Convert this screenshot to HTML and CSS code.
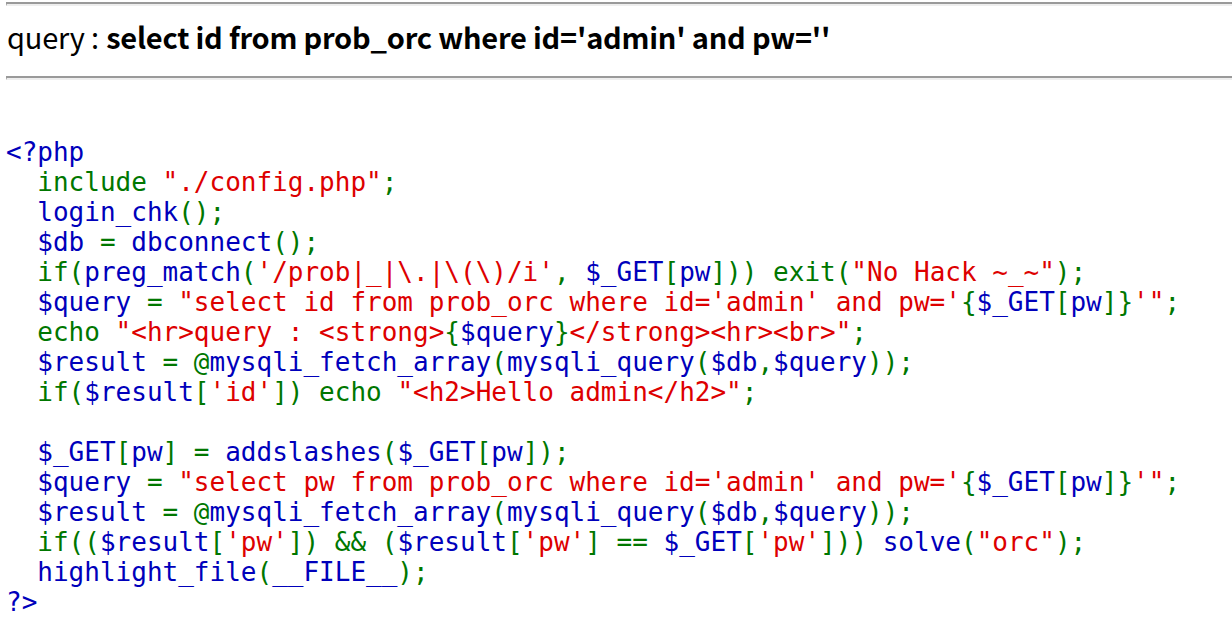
FILE: index.html
```html
<!DOCTYPE html>
<html>
<head>
<meta charset="utf-8">
<link rel="stylesheet" href="styles.css">
</head>
<body>
<hr class="rule">
<div class="query">query : <strong class="q-strong">select id from prob_orc where id='admin' and pw=''</strong></div>
<hr class="rule">
<pre class="code"><span class="d">&lt;?php</span>
  <span class="k">include </span><span class="s">"./config.php"</span><span class="k">;</span>
  <span class="d">login_chk</span><span class="k">();</span>
  <span class="d">$db </span><span class="k">= </span><span class="d">dbconnect</span><span class="k">();</span>
  <span class="k">if(</span><span class="d">preg_match</span><span class="k">(</span><span class="s">'/prob|_|\.|\(\)/i'</span><span class="k">, </span><span class="d">$_GET</span><span class="k">[</span><span class="d">pw</span><span class="k">])) exit(</span><span class="s">"No Hack ~_~"</span><span class="k">);</span>
  <span class="d">$query </span><span class="k">= </span><span class="s">"select id from prob_orc where id='admin' and pw='</span><span class="k">{</span><span class="d">$_GET</span><span class="k">[</span><span class="d">pw</span><span class="k">]}</span><span class="s">'"</span><span class="k">;</span>
  <span class="k">echo </span><span class="s">"&lt;hr&gt;query : &lt;strong&gt;</span><span class="k">{</span><span class="d">$query</span><span class="k">}</span><span class="s">&lt;/strong&gt;&lt;hr&gt;&lt;br&gt;"</span><span class="k">;</span>
  <span class="d">$result </span><span class="k">= @</span><span class="d">mysqli_fetch_array</span><span class="k">(</span><span class="d">mysqli_query</span><span class="k">(</span><span class="d">$db</span><span class="k">,</span><span class="d">$query</span><span class="k">));</span>
  <span class="k">if(</span><span class="d">$result</span><span class="k">[</span><span class="s">'id'</span><span class="k">]) echo </span><span class="s">"&lt;h2&gt;Hello admin&lt;/h2&gt;"</span><span class="k">;</span>

  <span class="d">$_GET</span><span class="k">[</span><span class="d">pw</span><span class="k">] = </span><span class="d">addslashes</span><span class="k">(</span><span class="d">$_GET</span><span class="k">[</span><span class="d">pw</span><span class="k">]);</span>
  <span class="d">$query </span><span class="k">= </span><span class="s">"select pw from prob_orc where id='admin' and pw='</span><span class="k">{</span><span class="d">$_GET</span><span class="k">[</span><span class="d">pw</span><span class="k">]}</span><span class="s">'"</span><span class="k">;</span>
  <span class="d">$result </span><span class="k">= @</span><span class="d">mysqli_fetch_array</span><span class="k">(</span><span class="d">mysqli_query</span><span class="k">(</span><span class="d">$db</span><span class="k">,</span><span class="d">$query</span><span class="k">));</span>
  <span class="k">if((</span><span class="d">$result</span><span class="k">[</span><span class="s">'pw'</span><span class="k">]) &amp;&amp; (</span><span class="d">$result</span><span class="k">[</span><span class="s">'pw'</span><span class="k">] == </span><span class="d">$_GET</span><span class="k">[</span><span class="s">'pw'</span><span class="k">])) </span><span class="d">solve</span><span class="k">(</span><span class="s">"orc"</span><span class="k">);</span>
  <span class="d">highlight_file</span><span class="k">(</span><span class="d">__FILE__</span><span class="k">);</span>
<span class="d">?&gt;</span></pre>
</body>
</html>
```

FILE: styles.css
```css
html, body {
  margin: 0;
  padding: 0;
  background: #ffffff;
}
body {
  padding: 2px 0 0 6px;
  color: #000000;
  overflow: hidden;
}
.rule {
  margin: 0;
  height: 0;
  border: 0;
  border-top: 2px solid #9a9a9a;
  border-bottom: 2px solid #eeeeee;
  border-left: 1px solid #9a9a9a;
}
.query {
  height: 70px;
  box-sizing: border-box;
  padding: 0 0 9px 1px;
  display: flex;
  align-items: center;
  font-family: "Noto Sans CJK KR", "Noto Sans", sans-serif;
  font-size: 29px;
  letter-spacing: -0.22px;
  line-height: 1.2;
}
.q-strong {
  font-weight: bold;
  margin-left: 0.25em;
}
.code {
  margin: 57px 0 0 0;
  font-family: "DejaVu Sans Mono", monospace;
  font-size: 26px;
  line-height: 30px;
  white-space: pre;
  color: #000000;
}
.d { color: #0000bb; }
.k { color: #007700; }
.s { color: #dd0000; }
```
